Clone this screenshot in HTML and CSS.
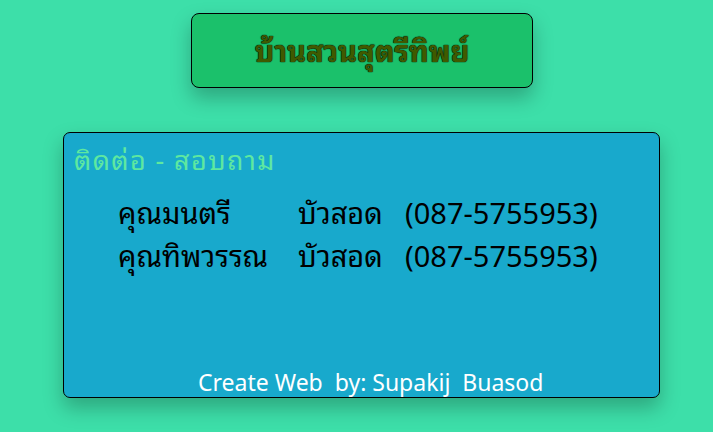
FILE: index.html
```html
<!DOCTYPE html>
<html lang="th">
<head>
<meta charset="utf-8">
<link rel="stylesheet" href="styles.css">
</head>
<body>
<div class="page">
  <header class="title-box">
    <h1 class="title">บ้านสวนสุตรีทิพย์</h1>
  </header>
  <section class="contact">
    <h2 class="contact-head">ติดต่อ - สอบถาม</h2>
    <div class="rows">
      <div class="row"><span class="name">คุณมนตรี</span><span class="surname">บัวสอด</span><span class="phone">(087-5755953)</span></div>
      <div class="row"><span class="name">คุณทิพวรรณ</span><span class="surname">บัวสอด</span><span class="phone">(087-5755953)</span></div>
    </div>
    <p class="credit">Create Web&nbsp; by: Supakij&nbsp; Buasod</p>
  </section>
</div>
</body>
</html>
```
FILE: styles.css
```css
html, body {
  margin: 0;
  padding: 0;
  background: #3ddfa9;
  font-family: "Noto Sans", "Noto Sans Thai Looped", "Loma", "Garuda", "Tahoma", "Noto Sans Thai", sans-serif;
}
.page {
  width: 713px;
  height: 432px;
  display: flex;
  flex-direction: column;
  padding-top: 13px;
  box-sizing: border-box;
}
.title-box {
  align-self: flex-start;
  margin-left: 191px;
  width: 342px;
  height: 75px;
  box-sizing: border-box;
  border: 1px solid #000;
  border-radius: 8px;
  background: #1bc16b;
  box-shadow: 0 10px 20px rgba(0, 0, 0, 0.25);
  display: flex;
  align-items: center;
  justify-content: center;
}
.title {
  margin: 0;
  font-size: 29px;
  font-weight: bold;
  color: #3f5a00;
  text-shadow: 0 0 1px #000, 0 0 1px #000;
  line-height: 1;
}
.contact {
  margin-left: 63px;
  margin-top: 44px;
  width: 597px;
  height: 266px;
  box-sizing: border-box;
  border: 1px solid #000;
  border-radius: 7px;
  background: #18a9cc;
  box-shadow: 0 10px 20px rgba(0, 0, 0, 0.25);
  display: flex;
  flex-direction: column;
  padding: 10px 0 0 10px;
}
.contact-head {
  margin: 0;
  font-size: 27px;
  font-weight: normal;
  letter-spacing: 1.4px;
  color: #5ee8a0;
  line-height: 34px;
}
.rows {
  margin-top: 16px;
  margin-left: 44px;
  display: flex;
  flex-direction: column;
  gap: 3px;
}
.row {
  display: grid;
  grid-template-columns: 180px 107px auto;
  font-size: 29px;
  line-height: 40px;
  color: #000;
}
.credit {
  margin: auto 0 0 0;
  padding-left: 124px;
  font-size: 23px;
  color: #fff;
  line-height: 30px;
  padding-bottom: 0;
}
```
